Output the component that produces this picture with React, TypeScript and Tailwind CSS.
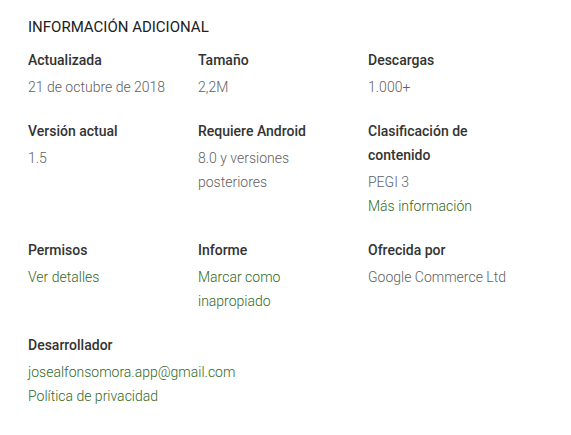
const items: { label: string; values: { text: string; link?: boolean }[] }[][] = [
  [
    { label: "Actualizada", values: [{ text: "21 de octubre de 2018" }] },
    { label: "Tamaño", values: [{ text: "2,2M" }] },
    { label: "Descargas", values: [{ text: "1.000+" }] },
  ],
  [
    { label: "Versión actual", values: [{ text: "1.5" }] },
    { label: "Requiere Android", values: [{ text: "8.0 y versiones posteriores" }] },
    {
      label: "Clasificación de contenido",
      values: [{ text: "PEGI 3" }, { text: "Más información", link: true }],
    },
  ],
  [
    { label: "Permisos", values: [{ text: "Ver detalles", link: true }] },
    { label: "Informe", values: [{ text: "Marcar como inapropiado", link: true }] },
    { label: "Ofrecida por", values: [{ text: "Google Commerce Ltd" }] },
  ],
  [
    {
      label: "Desarrollador",
      values: [
        { text: "josealfonsomora.app@gmail.com", link: true },
        { text: "Política de privacidad", link: true },
      ],
    },
  ],
];

export default function App() {
  return (
    <main className="w-[571px] h-[435px] bg-white px-7 pt-[17px] font-['Roboto',sans-serif] text-sm">
      <h2 className="text-[15px] leading-5 text-[#212121] mb-[11px]">INFORMACIÓN ADICIONAL</h2>
      <div className="flex flex-col gap-5">
        {items.map((row, i) => (
          <div key={i} className="flex">
            {row.map((item) => (
              <div key={item.label} className="w-[170px] pr-4 shrink-0">
                <div className="font-medium text-[#333] leading-6 mb-[3px]">{item.label}</div>
                {item.values.map((v) =>
                  v.link ? (
                    <a key={v.text} href="#" className="block font-light text-[#33691e] leading-6">
                      {v.text}
                    </a>
                  ) : (
                    <div key={v.text} className="font-light text-[#616161] leading-6">
                      {v.text}
                    </div>
                  )
                )}
              </div>
            ))}
          </div>
        ))}
      </div>
    </main>
  );
}
